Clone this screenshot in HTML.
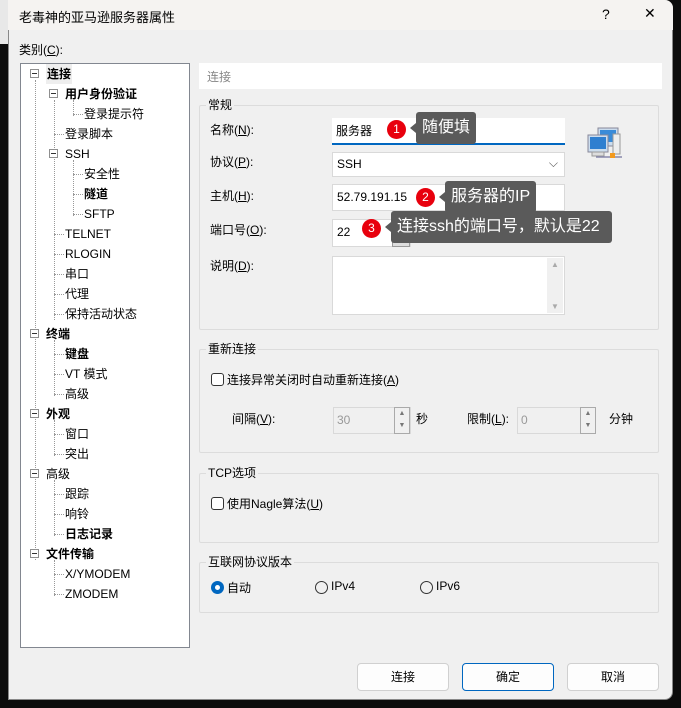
<!DOCTYPE html><html><head><meta charset="utf-8"><style>
*{box-sizing:border-box;margin:0;padding:0}
body{width:681px;height:708px;background:#0c0c0c;position:relative;overflow:hidden;font-family:"Liberation Sans","Noto Sans CJK SC",sans-serif;font-size:12px;color:#000}
.a{position:absolute}
#dlg{left:8px;top:0;width:665px;height:700px;background:#f0f0f0;border-radius:0 8px 8px 0;border:1px solid #888}
#title{left:8px;top:0;width:665px;height:30px;background:#f5f3f1;border-radius:0 8px 0 0}
.tree{left:20px;top:63px;width:170px;height:585px;background:#fff;border:1px solid #828790}
.ti{position:absolute;white-space:nowrap;line-height:20px;height:20px}
.b{font-weight:bold}
.box{position:absolute;width:9px;height:9px;border:1px solid #8f8f8f;background:#fff}
.box:after{content:"";position:absolute;left:1px;top:3px;width:5px;height:1px;background:#333}
.vl{position:absolute;border-left:1px dotted #999;width:0}
.hl{position:absolute;border-top:1px dotted #999;height:0}
.grp{position:absolute;border:1px solid #dcdcdc;border-radius:2px}
.gl{position:absolute;background:#f0f0f0;padding:0 2px;line-height:16px}
.inp{position:absolute;background:#fff;border:1px solid #d9d9d9}
.btn{position:absolute;top:663px;width:92px;height:28px;background:#fdfdfd;border:1px solid #d0d0d0;border-radius:4px;text-align:center;line-height:26px}
.tip{position:absolute;background:#5a5a5a;color:#fff;font-size:16px;line-height:32px;height:32px;padding:0 6px;border-radius:3px}
.tip:before{content:"";position:absolute;left:-6px;top:11px;border:5px solid transparent;border-right:6px solid #5a5a5a;border-left:0}
.num{position:absolute;width:19px;height:19px;border-radius:50%;background:#e8000d;color:#fff;font-size:12px;text-align:center;line-height:19px}
.cb{position:absolute;width:13px;height:13px;border:1px solid #333;border-radius:3px;background:#fff}
.spin{position:absolute;width:16px;background:#f0f0f0;border:1px solid #aaa;font-size:7px;color:#777;text-align:center}
u{text-decoration:underline}
</style></head><body>
<div class="a" style="left:0;top:0;width:8px;height:44px;background:#e8e8e8"></div>
<div class="a" id="dlg"></div>
<div class="a" id="title"></div>
<div class="a" style="left:19px;top:7px;font-size:13px">老毒神的亚马逊服务器属性</div>
<div class="a" style="left:602px;top:6px;font-size:14px">?</div>
<div class="a" style="left:644px;top:5px;font-size:14px">✕</div>
<div class="a" style="left:19px;top:41px">类别(<u>C</u>):</div>

<div class="a tree">
<div class="vl" style="left:14px;top:16px;height:480px"></div>
<div class="vl" style="left:33px;top:36px;height:220px"></div>
<div class="vl" style="left:52px;top:36px;height:16px"></div>
<div class="vl" style="left:52px;top:96px;height:56px"></div>
<div class="vl" style="left:33px;top:276px;height:56px"></div>
<div class="vl" style="left:33px;top:356px;height:36px"></div>
<div class="vl" style="left:33px;top:416px;height:56px"></div>
<div class="vl" style="left:33px;top:496px;height:36px"></div>
</div>
<div class="a" style="left:20px;top:63px">
<div class="box" style="left:10px;top:6px"></div><div class="ti b" style="left:26px;top:1px;background:#eee;padding:0 1px">连接</div>
<div class="box" style="left:29px;top:26px"></div><div class="ti b" style="left:45px;top:21px">用户身份验证</div>
<div class="hl" style="left:53px;top:51px;width:10px"></div><div class="ti" style="left:64px;top:41px">登录提示符</div>
<div class="hl" style="left:34px;top:71px;width:10px"></div><div class="ti" style="left:45px;top:61px">登录脚本</div>
<div class="box" style="left:29px;top:86px"></div><div class="ti" style="left:45px;top:81px">SSH</div>
<div class="hl" style="left:53px;top:111px;width:10px"></div><div class="ti" style="left:64px;top:101px">安全性</div>
<div class="hl" style="left:53px;top:131px;width:10px"></div><div class="ti b" style="left:64px;top:121px">隧道</div>
<div class="hl" style="left:53px;top:151px;width:10px"></div><div class="ti" style="left:64px;top:141px">SFTP</div>
<div class="hl" style="left:34px;top:171px;width:10px"></div><div class="ti" style="left:45px;top:161px">TELNET</div>
<div class="hl" style="left:34px;top:191px;width:10px"></div><div class="ti" style="left:45px;top:181px">RLOGIN</div>
<div class="hl" style="left:34px;top:211px;width:10px"></div><div class="ti" style="left:45px;top:201px">串口</div>
<div class="hl" style="left:34px;top:231px;width:10px"></div><div class="ti" style="left:45px;top:221px">代理</div>
<div class="hl" style="left:34px;top:251px;width:10px"></div><div class="ti" style="left:45px;top:241px">保持活动状态</div>
<div class="box" style="left:10px;top:266px"></div><div class="ti b" style="left:26px;top:261px">终端</div>
<div class="hl" style="left:34px;top:291px;width:10px"></div><div class="ti b" style="left:45px;top:281px">键盘</div>
<div class="hl" style="left:34px;top:311px;width:10px"></div><div class="ti" style="left:45px;top:301px">VT 模式</div>
<div class="hl" style="left:34px;top:331px;width:10px"></div><div class="ti" style="left:45px;top:321px">高级</div>
<div class="box" style="left:10px;top:346px"></div><div class="ti b" style="left:26px;top:341px">外观</div>
<div class="hl" style="left:34px;top:371px;width:10px"></div><div class="ti" style="left:45px;top:361px">窗口</div>
<div class="hl" style="left:34px;top:391px;width:10px"></div><div class="ti" style="left:45px;top:381px">突出</div>
<div class="box" style="left:10px;top:406px"></div><div class="ti" style="left:26px;top:401px">高级</div>
<div class="hl" style="left:34px;top:431px;width:10px"></div><div class="ti" style="left:45px;top:421px">跟踪</div>
<div class="hl" style="left:34px;top:451px;width:10px"></div><div class="ti" style="left:45px;top:441px">响铃</div>
<div class="hl" style="left:34px;top:471px;width:10px"></div><div class="ti b" style="left:45px;top:461px">日志记录</div>
<div class="box" style="left:10px;top:486px"></div><div class="ti b" style="left:26px;top:481px">文件传输</div>
<div class="hl" style="left:34px;top:511px;width:10px"></div><div class="ti" style="left:45px;top:501px">X/YMODEM</div>
<div class="hl" style="left:34px;top:531px;width:10px"></div><div class="ti" style="left:45px;top:521px">ZMODEM</div>
</div>

<div class="a" style="left:199px;top:63px;width:463px;height:26px;background:#fff;color:#888;padding:5px 8px">连接</div>

<div class="grp" style="left:199px;top:105px;width:460px;height:225px"></div>
<div class="gl" style="left:206px;top:97px">常规</div>
<div class="a" style="left:210px;top:121px">名称(<u>N</u>):</div>
<div class="a" style="left:210px;top:153px">协议(<u>P</u>):</div>
<div class="a" style="left:210px;top:187px">主机(<u>H</u>):</div>
<div class="a" style="left:210px;top:221px">端口号(<u>O</u>):</div>
<div class="a" style="left:210px;top:257px">说明(<u>D</u>):</div>
<div class="inp" style="left:332px;top:118px;width:233px;height:27px;border:none;border-bottom:2px solid #0067c0;padding:4px 4px">服务器</div>
<div class="inp" style="left:332px;top:152px;width:233px;height:25px;padding:4px 4px">SSH<span class="a" style="right:6px;top:3px;color:#555">⌵</span></div>
<div class="inp" style="left:332px;top:184px;width:233px;height:27px;padding:5px 4px">52.79.191.15</div>
<div class="inp" style="left:332px;top:219px;width:79px;height:28px;padding:5px 4px">22</div>
<div class="a" style="left:392px;top:235px;width:18px;height:12px;background:#ddd;border:1px solid #999"></div>
<div class="inp" style="left:332px;top:256px;width:233px;height:59px"><div class="a" style="right:1px;top:1px;width:16px;height:55px;background:#f0f0f0;color:#aaa;font-size:8px;text-align:center;line-height:14px">▲<br><br><br>▼</div></div>
<svg class="a" style="left:586px;top:126px" width="38" height="34" viewBox="0 0 38 34">
<rect x="12" y="2" width="20" height="18" fill="#cde" stroke="#889"/><rect x="14" y="4" width="16" height="12" fill="#3a8bd8"/>
<rect x="27" y="8" width="7" height="20" fill="#eee" stroke="#999"/>
<rect x="2" y="9" width="20" height="17" fill="#cde" stroke="#889"/><rect x="4" y="11" width="16" height="12" fill="#2f7fd0"/>
<rect x="6" y="26" width="12" height="4" fill="#ddd" stroke="#999"/>
<line x1="10" y1="31" x2="36" y2="31" stroke="#88a" stroke-width="1.5"/><rect x="24" y="27" width="5" height="5" fill="#f39a1e"/>
</svg>
<div class="num" style="left:387px;top:120px">1</div>
<div class="tip" style="left:416px;top:112px">随便填</div>
<div class="num" style="left:416px;top:188px">2</div>
<div class="tip" style="left:445px;top:181px">服务器的IP</div>
<div class="num" style="left:362px;top:219px">3</div>
<div class="tip" style="left:391px;top:211px;width:221px">连接ssh的端口号，默认是22</div>

<div class="grp" style="left:199px;top:349px;width:460px;height:104px"></div>
<div class="gl" style="left:206px;top:341px">重新连接</div>
<div class="cb" style="left:211px;top:373px"></div>
<div class="a" style="left:227px;top:371px">连接异常关闭时自动重新连接(<u>A</u>)</div>
<div class="a" style="left:232px;top:410px">间隔(<u>V</u>):</div>
<div class="inp" style="left:333px;top:407px;width:78px;height:27px;background:#f0f0f0;color:#999;padding:5px 3px">30</div>
<div class="spin" style="left:394px;top:407px;height:27px;line-height:12px">▲<br>▼</div>
<div class="a" style="left:416px;top:410px">秒</div>
<div class="a" style="left:467px;top:410px">限制(<u>L</u>):</div>
<div class="inp" style="left:517px;top:407px;width:78px;height:27px;background:#f0f0f0;color:#999;padding:5px 3px">0</div>
<div class="spin" style="left:580px;top:407px;height:27px;line-height:12px">▲<br>▼</div>
<div class="a" style="left:609px;top:410px">分钟</div>

<div class="grp" style="left:199px;top:473px;width:460px;height:70px"></div>
<div class="gl" style="left:206px;top:465px">TCP选项</div>
<div class="cb" style="left:211px;top:497px"></div>
<div class="a" style="left:227px;top:495px">使用Nagle算法(<u>U</u>)</div>

<div class="grp" style="left:199px;top:562px;width:460px;height:51px"></div>
<div class="gl" style="left:206px;top:554px">互联网协议版本</div>
<div class="a" style="left:211px;top:581px;width:13px;height:13px;border-radius:50%;background:#0067c0"><div class="a" style="left:4px;top:4px;width:5px;height:5px;border-radius:50%;background:#fff"></div></div>
<div class="a" style="left:227px;top:579px">自动</div>
<div class="a" style="left:315px;top:581px;width:13px;height:13px;border-radius:50%;border:1px solid #333"></div>
<div class="a" style="left:331px;top:579px">IPv4</div>
<div class="a" style="left:420px;top:581px;width:13px;height:13px;border-radius:50%;border:1px solid #333"></div>
<div class="a" style="left:436px;top:579px">IPv6</div>

<div class="btn" style="left:357px">连接</div>
<div class="btn" style="left:462px;border-color:#0067c0">确定</div>
<div class="btn" style="left:567px">取消</div>
</body></html>
